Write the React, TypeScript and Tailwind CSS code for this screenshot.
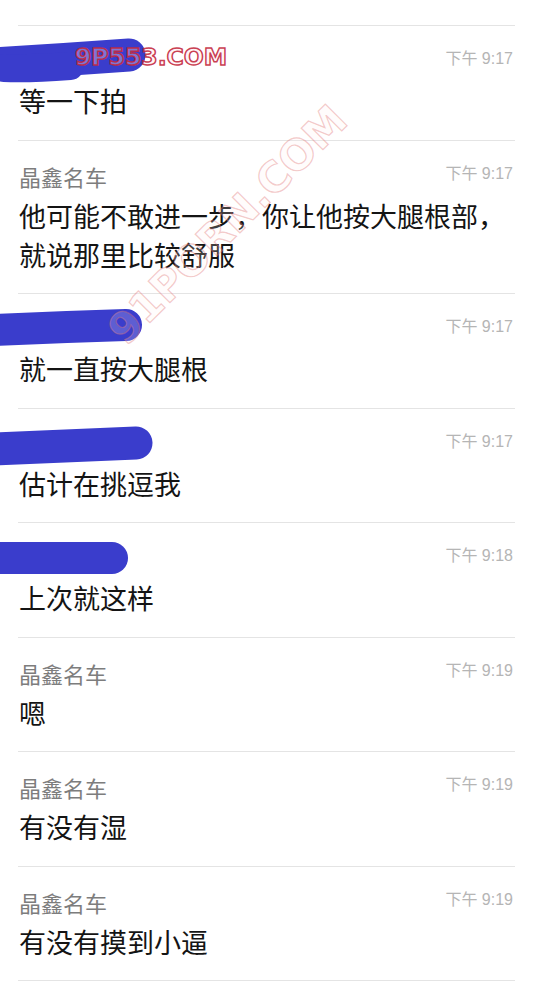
import React from "react";

type Row = { name: string; time: string; lines: string[] };

const rows: Row[] = [
  { name: "", time: "下午 9:17", lines: ["等一下拍"] },
  {
    name: "晶鑫名车",
    time: "下午 9:17",
    lines: ["他可能不敢进一步，你让他按大腿根部，", "就说那里比较舒服"],
  },
  { name: "", time: "下午 9:17", lines: ["就一直按大腿根"] },
  { name: "", time: "下午 9:17", lines: ["估计在挑逗我"] },
  { name: "", time: "下午 9:18", lines: ["上次就这样"] },
  { name: "晶鑫名车", time: "下午 9:19", lines: ["嗯"] },
  { name: "晶鑫名车", time: "下午 9:19", lines: ["有没有湿"] },
  { name: "晶鑫名车", time: "下午 9:19", lines: ["有没有摸到小逼"] },
];

const cjk = "font-['Noto_Sans_CJK_SC','Noto_Sans',sans-serif]";

export default function App() {
  return (
    <div className="relative w-[542px] h-[1000px] bg-white overflow-hidden">
      <div className="pl-[18px] pr-[27px] pt-[25px]">
        <div className="border-t border-[#e4e4e4]">
          {rows.map((r, i) => (
            <div key={i} className="border-b border-[#e4e4e4] pt-[23px] pb-[19.5px]">
              <div className="flex items-start justify-between h-[24px]">
                <span className={`${cjk} text-[22px] leading-[24px] text-[#7d7d7d] pl-[1px]`}>
                  {r.name}
                </span>
                <span className="font-['Liberation_Sans','Noto_Sans_CJK_SC',sans-serif] text-[16px] leading-[20px] text-[#b5b5b5] pr-[2px]">
                  {r.time}
                </span>
              </div>
              <div className={`${cjk} mt-[8px] text-[27px] leading-[39px] text-[#141414] pl-[1px]`}>
                {r.lines.map((l, j) => (
                  <div key={j}>{l}</div>
                ))}
              </div>
            </div>
          ))}
        </div>
      </div>

      <svg
        className="absolute inset-0 pointer-events-none"
        width="542"
        height="1000"
        viewBox="0 0 542 1000"
      >
        <g fill="none" stroke="#3a3dcc" strokeLinecap="round">
          <path d="M -6 64 Q 60 60 129 55" strokeWidth="33" />
          <path d="M 4 68 Q 30 69 70 66" strokeWidth="28" />
          <path d="M -6 330 Q 60 327 126 325" strokeWidth="32" />
          <path d="M -6 449 Q 70 446 136 443" strokeWidth="33" />
          <path d="M -6 558 Q 60 558 112 558" strokeWidth="32" />
        </g>
      </svg>

      <div className="absolute left-[75px] top-[43px] font-['DejaVu_Sans',sans-serif] font-bold text-[23.5px] leading-[28px] text-[rgba(255,225,230,0.35)] [-webkit-text-stroke:1.5px_rgba(195,40,60,0.9)] pointer-events-none">
        9P553.COM
      </div>

      <div className="absolute left-[228px] top-[225px] w-0 h-0 pointer-events-none">
        <div className="absolute left-[-180px] top-[-25px] w-[360px] text-center rotate-[-45deg] font-['DejaVu_Sans',sans-serif] font-bold text-[42px] leading-[50px] text-[rgba(255,240,240,0.2)] [-webkit-text-stroke:1.2px_rgba(225,120,120,0.4)]">
          91PORN.COM
        </div>
      </div>
    </div>
  );
}
